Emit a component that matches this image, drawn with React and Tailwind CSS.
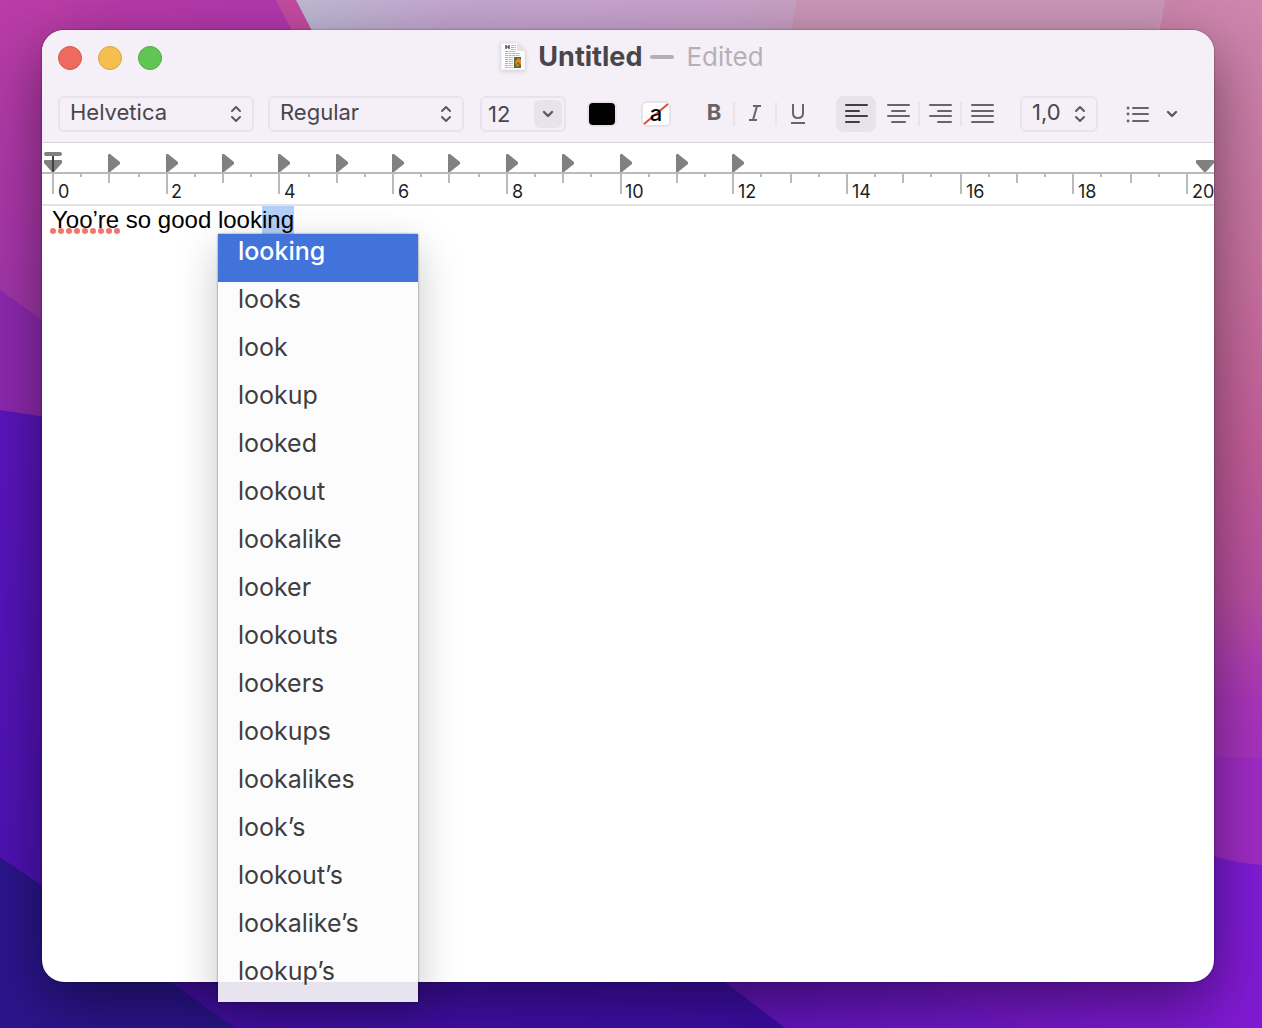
import { useState } from "react"

const words = [
  "looking", "looks", "look", "lookup", "looked", "lookout", "lookalike", "looker",
  "lookouts", "lookers", "lookups", "lookalikes", "look’s", "lookout’s", "lookalike’s", "lookup’s"
]

// ruler ticks sit on even pixels, 28.35 points to the centimetre
const tickX = (cm) => 10 + 2 * Math.round(cm * 28.35)
const centimetres = Array.from({ length: 21 }, (_, i) => i)
const tabStops = centimetres.slice(1, 13)

function Wallpaper() {
  return (
    <svg className="absolute inset-0 -z-10 w-full h-full" viewBox="0 0 1262 1028" preserveAspectRatio="none" aria-hidden="true">
      <defs>
        <linearGradient id="top" x1="0" x2="1" y1="0" y2="0">
          <stop offset="0.24" stopColor="#bfb9d4" />
          <stop offset="0.36" stopColor="#c5a6d0" />
          <stop offset="0.55" stopColor="#c8a2cc" />
          <stop offset="0.63" stopColor="#c9a0c4" />
        </linearGradient>
        <linearGradient id="right" x1="0" x2="0" y1="0" y2="1">
          <stop offset="0" stopColor="#cd86ad" />
          <stop offset="0.3" stopColor="#c6709f" />
          <stop offset="0.5" stopColor="#c25d98" />
          <stop offset="0.66" stopColor="#b94fa0" />
          <stop offset="0.78" stopColor="#a935ba" />
          <stop offset="0.85" stopColor="#a532bd" />
        </linearGradient>
        <linearGradient id="magenta" x1="0" x2="1" y1="0" y2="1">
          <stop offset="0" stopColor="#b93ca6" />
          <stop offset="1" stopColor="#a82fb8" />
        </linearGradient>
        <linearGradient id="left" x1="0" x2="0" y1="0" y2="1">
          <stop offset="0" stopColor="#ba3ca6" />
          <stop offset="1" stopColor="#9632aa" />
        </linearGradient>
        <linearGradient id="indigo" x1="0" x2="1" y1="0" y2="1">
          <stop offset="0" stopColor="#5a15bd" />
          <stop offset="1" stopColor="#3b0da3" />
        </linearGradient>
        <linearGradient id="violet" x1="0" x2="1" y1="0" y2="0">
          <stop offset="0" stopColor="#5e13b8" />
          <stop offset="1" stopColor="#7f1bd6" />
        </linearGradient>
      </defs>
      <rect width="1262" height="1028" fill="url(#top)" />
      <path d="M797 0H1165L1120 200H760Z" fill="#cb96b8" />
      <path d="M1165 0H1262V900H1000Z" fill="url(#right)" />
      <path d="M0 0H296L420 240V600H0Z" fill="#c44ca0" />
      <path d="M0 0H276L380 200V600H0Z" fill="url(#magenta)" />
      <path d="M0 0H70V440H0Z" fill="url(#left)" />
      <path d="M0 290L120 375V500H0Z" fill="#8d29ae" />
      <path d="M1180 755Q1225 758 1262 758V900H1180Z" fill="#9e2cc4" />
      <path d="M660 700L1214 856Q1240 864 1262 865V1028H660Z" fill="url(#violet)" />
      <path d="M925 982Q970 1010 1030 1028H1262V960H925Z" fill="#861bc8" opacity="0.2" />
      <path d="M0 410L600 500L660 936L725 982L785 1028H0Z" fill="url(#indigo)" />
      <path d="M0 857L45 888L170 982L236 1028H0Z" fill="#2a158c" />
    </svg>
  )
}

function UpDown() {
  return (
    <svg className="pointer-events-none" width="12" height="18" viewBox="0 0 12 18" fill="none" stroke="#5d5960" strokeWidth="2" strokeLinecap="round" strokeLinejoin="round">
      <path d="M2 6L6 2L10 6M2 12L6 16L10 12" />
    </svg>
  )
}

function Popup({ label, options, className }) {
  return (
    <div className={`flex items-center h-9 rounded-md border-2 border-[#e8e3eb] pr-2.5 ${className}`}>
      <select aria-label={label} className="flex-1 min-w-0 h-8 -mr-3 pl-2.5 pb-1 leading-7 appearance-none bg-transparent outline-none">
        {options.map(o => <option key={o}>{o}</option>)}
      </select>
      <UpDown />
    </div>
  )
}

const lineSets = {
  left: ["M1 2H22", "M1 8H14", "M1 13H22", "M1 19H14"],
  center: ["M1 2H22", "M5 8H18", "M1 13H22", "M5 19H18"],
  right: ["M1 2H22", "M9 8H22", "M1 13H22", "M9 19H22"],
  justify: ["M1 2H22", "M1 8H22", "M1 13H22", "M1 19H22"]
}

function AlignButton({ kind, active, onClick }) {
  return (
    <button
      type="button"
      aria-label={`Align ${kind}`}
      aria-pressed={active}
      onClick={onClick}
      className={`flex items-center justify-center w-10 h-9 pb-0.5 rounded-lg ${active ? "bg-[#e8e3ea] text-[#403d43]" : "text-[#68636c]"}`}
    >
      <svg width="23" height="21" viewBox="0 0 23 21" stroke="currentColor" strokeWidth="2" strokeLinecap="round">
        {lineSets[kind].map(d => <path key={d} d={d} />)}
      </svg>
    </button>
  )
}

function Divider() {
  return <span className="w-0.5 h-6 bg-[#e9e4ec]" />
}

function TitleBar() {
  return (
    <div className="relative flex items-center justify-center h-14">
      <div className="absolute left-4 flex gap-4">
        <button type="button" aria-label="Close" className="size-6 rounded-full bg-[#ed6a5e] border border-[#d9574c]" />
        <button type="button" aria-label="Minimize" className="size-6 rounded-full bg-[#f5bf4f] border border-[#dca53c]" />
        <button type="button" aria-label="Zoom" className="size-6 rounded-full bg-[#61c554] border border-[#50ac43]" />
      </div>
      <h1 className="flex items-center pl-2 pb-0.5 text-[26px] leading-8 text-[#b5b0b8]">
        <svg className="mr-3 drop-shadow-sm" width="26" height="30" viewBox="0 0 26 30" aria-hidden="true">
          <path d="M1 1H17L25 9V28H1Z" fill="#fdfdfd" stroke="#dedbe0" strokeWidth="0.6" />
          <path d="M17 1V9H25Z" fill="#e4e3e6" />
          <path d="M6 3V7M9 3V7M6 5H9" stroke="#333" strokeWidth="1.2" />
          <path d="M11 3.5H16M11 5.5H16M11 7.5H16M5 9.5H16M5 11.5H20M5 13.5H20M5 15.5H13M5 17.5H13M5 19.5H13M5 21.5H13M5 23.5H13M5 25.5H13" stroke="#aaa" strokeWidth="0.9" strokeDasharray="3 0.6" />
          <rect x="14" y="15" width="7" height="11" fill="#53702f" />
          <path d="M15 20L18 16L21 18V22L17 25Z" fill="#df8a32" />
          <path d="M16 22L19 20L20 23Z" fill="#b84422" />
        </svg>
        <span className="font-bold text-[27px] text-[#48454b]">Untitled</span>
        <span className="mx-2 w-6 h-1 rounded-sm bg-[#b5b0b8]" />
        <span className="ml-1">Edited</span>
      </h1>
    </div>
  )
}

function Toolbar() {
  const [align, setAlign] = useState("left")

  return (
    <div className="flex items-center h-14 pl-4 text-[22px] text-[#48454b]">
      <Popup label="Font family" options={["Helvetica"]} className="w-[196px]" />
      <Popup label="Typeface" options={["Regular"]} className="w-[196px] ml-3.5" />

      <div className="flex items-center w-[86px] h-9 ml-4 rounded-md border-2 border-[#e8e3eb]">
        <input aria-label="Font size" defaultValue="12" className="w-[52px] pl-1.5 bg-transparent outline-none" />
        <button type="button" aria-label="Font sizes" className="flex items-center justify-center w-7 h-7 rounded-md bg-[#e8e3ea]">
          <svg width="12" height="8" viewBox="0 0 12 8" fill="none" stroke="#5d5960" strokeWidth="2.4" strokeLinecap="round" strokeLinejoin="round"><path d="M2 2L6 6L10 2" /></svg>
        </button>
      </div>

      <button type="button" aria-label="Text colour" className="w-[30px] h-[26px] ml-[21px] rounded-md bg-black border-2 border-[#e8e3ea]" />
      <button type="button" aria-label="Highlight colour" className="relative flex items-center justify-center w-[30px] h-[26px] ml-6 rounded-md bg-white border-2 border-[#e8e3ea] text-black font-medium leading-5">
        <svg className="absolute inset-0" width="26" height="22" viewBox="0 0 26 22"><path d="M1 21L25 1" stroke="#e2493b" strokeWidth="2" /></svg>
        <span className="relative pb-0.5">a</span>
      </button>

      <div className="flex items-center ml-[22px] text-[#68636c]">
        <button type="button" aria-label="Bold" className="w-10 h-9 pl-0.5 pb-1 font-bold">B</button>
        <Divider />
        <button type="button" aria-label="Italic" className="flex items-center justify-center w-10 h-9 pb-0.5">
          <svg width="14" height="18" viewBox="0 0 14 18" fill="none" stroke="currentColor" strokeWidth="2"><path d="M5 2H13M1 16H9M9 2L5 16" /></svg>
        </button>
        <Divider />
        <button type="button" aria-label="Underline" className="flex items-center justify-center w-[42px] h-9">
          <svg width="16" height="22" viewBox="0 0 16 22" fill="none" stroke="currentColor" strokeWidth="2"><path d="M3 1V10Q3 15 8 15T13 10V1M1 20H15" /></svg>
        </button>
      </div>

      <div className="flex items-center ml-[17px]">
        <AlignButton kind="left" active={align === "left"} onClick={() => setAlign("left")} />
        <span className="w-0.5" />
        <AlignButton kind="center" active={align === "center"} onClick={() => setAlign("center")} />
        <Divider />
        <AlignButton kind="right" active={align === "right"} onClick={() => setAlign("right")} />
        <Divider />
        <AlignButton kind="justify" active={align === "justify"} onClick={() => setAlign("justify")} />
      </div>

      <Popup label="Line spacing" options={["1,0"]} className="w-[78px] ml-[18px]" />

      <button type="button" aria-label="Lists" className="flex items-center gap-4 ml-7">
        <svg width="24" height="18" viewBox="0 0 24 18" stroke="#68636c" strokeWidth="2" strokeLinecap="round">
          <path d="M7 3H22M7 9H22M7 16H22" />
          <path d="M2 3H2.1M2 9H2.1M2 16H2.1" strokeWidth="2.8" />
        </svg>
        <svg width="12" height="8" viewBox="0 0 12 8" fill="none" stroke="#5d5960" strokeWidth="2.4" strokeLinecap="round" strokeLinejoin="round"><path d="M2 2L6 6L10 2" /></svg>
      </button>
    </div>
  )
}

function Ruler() {
  return (
    <div className="h-16 overflow-hidden border-t border-b-2 border-t-[#d9d5dc] border-b-[#e3e3e3] bg-white">
      <svg className="w-full h-[61px] text-[18px]" fill="#1f1f1f">
        <path d="M0 30H4000" stroke="#bababa" strokeWidth="2" />
        {centimetres.map(cm => (
          <g key={cm}>
            <rect x={tickX(cm)} y="31" width="2" height={cm % 2 ? 9 : 20} fill="#bababa" />
            <rect x={tickX(cm + 0.5)} y="31" width="2" height="3" fill="#bababa" />
            {cm % 2 === 0 && <text x={tickX(cm) + (cm === 2 || cm === 10 ? 5 : 6)} y="55">{cm}</text>}
          </g>
        ))}
        {tabStops.map(cm => (
          <path key={cm} transform={`translate(${tickX(cm)} 11)`} d="M0 1Q0 0 1 0H2L12 8V10L2 18H0Z" fill="#808080" />
        ))}
        <path d="M4 11H18" stroke="#808080" strokeWidth="4" strokeLinecap="round" />
        <path d="M2 18Q2 17 3 17H19Q20 17 20 18V20L12 29H10L2 20Z" fill="#808080" />
        <path d="M11 13V29" stroke="#404040" strokeWidth="2" />
        <path d="M1154 18Q1154 17 1155 17H1171Q1172 17 1172 18V20L1164 29H1162L1154 20Z" fill="#808080" />
      </svg>
    </div>
  )
}

// nine dots under a misspelled word
function Squiggle() {
  return (
    <svg className="absolute -left-0.5 top-[22px]" width="70" height="6" viewBox="0 0 70 6" aria-hidden="true">
      <path d="M3 3H68" stroke="#f0776c" strokeWidth="6" strokeLinecap="round" strokeDasharray="0 8" />
    </svg>
  )
}

function Completions() {
  const [selected, setSelected] = useState(0)

  return (
    <ul
      role="listbox"
      aria-label="Completions"
      className="absolute top-7 left-0 z-10 w-[200px] bg-[#fcfcfc]/90 font-[Inter,sans-serif] text-[25px] leading-8 text-[#3e3d40]
                 shadow-[0_0_2px_rgba(0,0,0,0.5),0_14px_40px_rgba(0,0,0,0.22)]"
    >
      {words.map((word, i) => (
        <li key={word} role="option" aria-selected={i === selected}>
          <button
            type="button"
            onClick={() => setSelected(i)}
            className={`block w-full h-12 pl-5 pb-3.5 text-left ${i === selected ? "bg-[#4173db] text-white font-medium" : ""}`}
          >
            {word}
          </button>
        </li>
      ))}
    </ul>
  )
}

export default function App() {
  return (
    <div className="relative isolate flex flex-col min-h-screen overflow-hidden pt-[30px] pr-12 pb-[46px] pl-[42px] font-[Inter,sans-serif]">
      <Wallpaper />
      <main className="flex-1 flex flex-col rounded-[22px] bg-white shadow-[0_0_2px_rgba(0,0,0,0.5),0_20px_60px_rgba(0,0,0,0.45)]">
        <header className="rounded-t-[22px] bg-[#f5f0f7]">
          <TitleBar />
          <Toolbar />
        </header>
        <Ruler />
        <div className="flex-1 pl-2.5 font-['Liberation_Sans',Arial,sans-serif] text-2xl leading-7 text-black">
          <p className="whitespace-nowrap">
            <span className="relative">Yoo’re<Squiggle /></span>
            {" so good "}
            <span className="relative inline-block">
              look<mark className="inline-block h-7 bg-[#b3d0f8] text-black">ing</mark>
              <Completions />
            </span>
          </p>
        </div>
      </main>
    </div>
  )
}
